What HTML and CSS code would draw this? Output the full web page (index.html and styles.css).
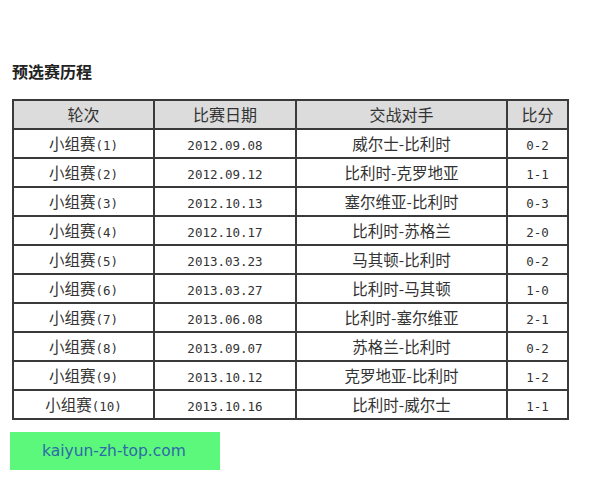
FILE: index.html
```html
<!DOCTYPE html>
<html>
<head>
<meta charset="utf-8">
<link rel="stylesheet" href="styles.css">
</head>
<body>
<div class="page">
  <h2 class="title">预选赛历程</h2>
  <table class="results">
    <colgroup>
      <col class="c1"><col class="c2"><col class="c3"><col class="c4">
    </colgroup>
    <thead>
      <tr><th>轮次</th><th>比赛日期</th><th>交战对手</th><th>比分</th></tr>
    </thead>
    <tbody>
      <tr><td>小组赛<span class="num">(1)</span></td><td><span class="num">2012.09.08</span></td><td>威尔士-比利时</td><td><span class="num">0-2</span></td></tr>
      <tr><td>小组赛<span class="num">(2)</span></td><td><span class="num">2012.09.12</span></td><td>比利时-克罗地亚</td><td><span class="num">1-1</span></td></tr>
      <tr><td>小组赛<span class="num">(3)</span></td><td><span class="num">2012.10.13</span></td><td>塞尔维亚-比利时</td><td><span class="num">0-3</span></td></tr>
      <tr><td>小组赛<span class="num">(4)</span></td><td><span class="num">2012.10.17</span></td><td>比利时-苏格兰</td><td><span class="num">2-0</span></td></tr>
      <tr><td>小组赛<span class="num">(5)</span></td><td><span class="num">2013.03.23</span></td><td>马其顿-比利时</td><td><span class="num">0-2</span></td></tr>
      <tr><td>小组赛<span class="num">(6)</span></td><td><span class="num">2013.03.27</span></td><td>比利时-马其顿</td><td><span class="num">1-0</span></td></tr>
      <tr><td>小组赛<span class="num">(7)</span></td><td><span class="num">2013.06.08</span></td><td>比利时-塞尔维亚</td><td><span class="num">2-1</span></td></tr>
      <tr><td>小组赛<span class="num">(8)</span></td><td><span class="num">2013.09.07</span></td><td>苏格兰-比利时</td><td><span class="num">0-2</span></td></tr>
      <tr><td>小组赛<span class="num">(9)</span></td><td><span class="num">2013.10.12</span></td><td>克罗地亚-比利时</td><td><span class="num">1-2</span></td></tr>
      <tr><td>小组赛<span class="num">(10)</span></td><td><span class="num">2013.10.16</span></td><td>比利时-威尔士</td><td><span class="num">1-1</span></td></tr>
    </tbody>
  </table>
  <div class="badge">kaiyun-zh-top.com</div>
</div>
</body>
</html>
```

FILE: styles.css
```css
html, body {
  margin: 0;
  padding: 0;
  background: #ffffff;
}
.page {
  padding: 61px 0 0 12px;
  font-family: "Noto Sans CJK SC", sans-serif;
  color: #333;
}
.title {
  margin: 0;
  font-size: 16px;
  line-height: 20px;
  font-weight: bold;
  color: #222;
}
.results {
  margin-top: 18px;
  margin-left: 0;
  border-collapse: collapse;
  width: 555px;
  table-layout: fixed;
  border: 2px solid #3a3a3a;
}
.c1 { width: 141px; }
.c2 { width: 142px; }
.c3 { width: 211px; }
.c4 { width: 61px; }
.results th,
.results td {
  border: 2px solid #3a3a3a;
  height: 27px;
  padding: 0;
  text-align: center;
  font-size: 15.5px;
  line-height: 27px;
  font-weight: normal;
  color: #333;
  overflow: hidden;
}
.results th {
  background: #dcdcdc;
  font-size: 16px;
}
.num {
  font-family: "DejaVu Sans Mono", monospace;
  font-size: 12.5px;
  line-height: 1;
  vertical-align: baseline;
}
.badge {
  margin: 12px 0 0 -2px;
  width: 178px;
  height: 38px;
  padding-left: 32px;
  background: #5bf87c;
  color: #2f6aa8;
  font-family: "DejaVu Sans", sans-serif;
  font-size: 15.5px;
  line-height: 38px;
}
```
